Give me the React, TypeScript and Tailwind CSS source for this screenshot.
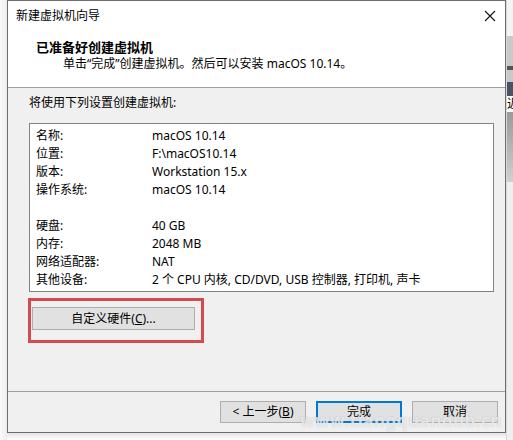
const font = { fontFamily: '"Noto Sans", "Noto Sans CJK SC", sans-serif' };

const rows = [
  { k: '名称:', v: 'macOS 10.14' },
  { k: '位置:', v: 'F:\\macOS10.14' },
  { k: '版本:', v: 'Workstation 15.x' },
  { k: '操作系统:', v: 'macOS 10.14' },
  { k: '', v: '' },
  { k: '硬盘:', v: '40 GB' },
  { k: '内存:', v: '2048 MB' },
  { k: '网络适配器:', v: 'NAT' },
  { k: '其他设备:', v: '2 个 CPU 内核, CD/DVD, USB 控制器, 打印机, 声卡' },
];

function WinButton({ children, primary }: { children: React.ReactNode; primary?: boolean }) {
  return (
    <button
      className={`w-[86px] h-[22px] flex items-center justify-center text-[12px] text-black bg-[#e1e1e1] ${
        primary ? 'border-2 border-[#0078d7]' : 'border border-[#adadad]'
      }`}
    >
      {children}
    </button>
  );
}

export default function App() {
  return (
    <div className="w-[513px] h-[440px] bg-white flex overflow-hidden relative text-black" style={font}>
      {/* left shadow margin */}
      <div className="w-[7px] shrink-0 h-[440px] bg-gradient-to-r from-[#fafafa] to-[#ececec]" />

      {/* dialog */}
      <div className="flex flex-col shrink-0">
        <div className="w-[499px] h-[433px] border border-[#6e6e6e] flex flex-col bg-[#f0f0f0]">
          {/* title + header */}
          <div className="h-[87px] bg-white border-b border-[#a0a0a0] flex flex-col">
            <div className="h-[29px] flex items-center justify-between pl-[8px] pr-[6px]">
              <span className="text-[12px]">新建虚拟机向导</span>
              <svg width="12" height="12" viewBox="0 0 12 12" className="mr-[3px]">
                <path d="M1 1 L11 11 M11 1 L1 11" stroke="#111" strokeWidth="1.1" />
              </svg>
            </div>
            <div className="pl-[28px] mt-[9px] text-[13px] font-bold leading-[17px]">已准备好创建虚拟机</div>
            <div className="pl-[55px] text-[12px] leading-[16px]">单击“完成”创建虚拟机。然后可以安装 macOS 10.14。</div>
          </div>

          {/* body */}
          <div className="flex-1 flex flex-col pl-[21px]">
            <div className="mt-[7px] text-[12px] leading-[16px]">将使用下列设置创建虚拟机:</div>
            <div className="mt-[12px] w-[465px] h-[169px] bg-white border border-[#828282] pt-[3px] pl-[6px]">
              {rows.map((r, i) => (
                <div key={i} className="flex h-[18px] items-center text-[12px]">
                  <span className="w-[116px]">{r.k}</span>
                  <span>{r.v}</span>
                </div>
              ))}
            </div>
            <div className="relative mt-[15px] ml-[3px] w-[163px]">
              <button className="w-[163px] h-[23px] bg-[#e1e1e1] border border-[#adadad] text-[12px] flex items-center justify-center">
                自定义硬件(<span className="underline">C</span>)...
              </button>
              <div className="absolute top-[-9px] left-[-4px] right-[-9px] bottom-[-13px] border-[3px] border-[#d34a4f]" />
            </div>
          </div>

          {/* footer */}
          <div className="h-[41px] border-t border-[#a0a0a0] flex justify-end items-start pt-[9px] pr-[7px] gap-[10px]">
            <WinButton>
              &lt; 上一步(<span className="underline">B</span>)
            </WinButton>
            <WinButton primary>完成</WinButton>
            <WinButton>取消</WinButton>
          </div>
        </div>
        <div className="flex-1 bg-gradient-to-b from-[#e4e4e4] to-white" />
      </div>

      {/* right strip of the window behind */}
      <div className="flex-1 min-w-0 overflow-hidden flex flex-col border-l border-[#d8d8d8]">
        <div className="h-[36px] bg-[#f4f4f4]" />
        <div className="h-[30px] bg-[#c9c9c9]" />
        <div className="h-[4px] bg-[#555]" />
        <div className="h-[12px] bg-[#c9c9c9]" />
        <div className="h-[14px] bg-[#4a5563]" />
        <div className="h-[16px] bg-white text-[12px] leading-[16px] whitespace-nowrap">近</div>
        <div className="h-[70px] bg-gradient-to-b from-[#9a9a9a] to-[#d0d0d0]" />
        <div className="flex-1 bg-[#efefef]" />
      </div>

      {/* watermark */}
      <div className="absolute left-[300px] top-[408px] text-[17px] font-bold text-white/70 tracking-[0.5px] [text-shadow:0_0_1px_rgba(120,120,120,0.5)] pointer-events-none">
        www.tiangquandub.cn
      </div>
    </div>
  );
}
